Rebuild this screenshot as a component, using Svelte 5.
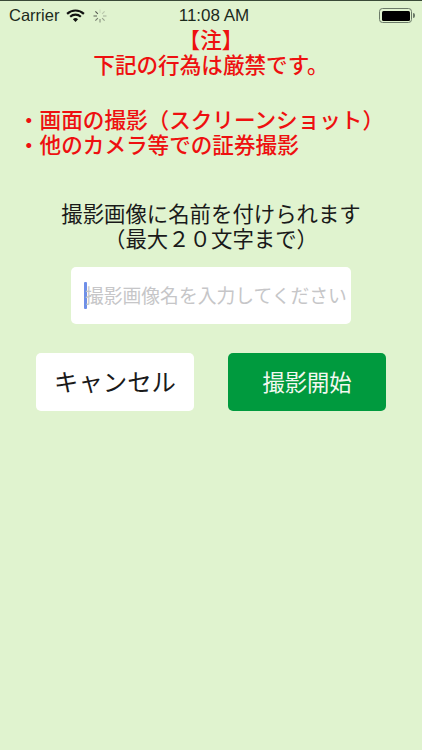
<script>
  const spokes = [0, 45, 90, 135, 180, 225, 270, 315];
</script>

<div class="screen">
  <div class="status">
    <div class="left">
      <span class="carrier">Carrier</span>
      <svg class="wifi" viewBox="0 0 20 15" width="19" height="14" aria-hidden="true">
        <path d="M1 5.2 A13 13 0 0 1 19 5.2" fill="none" stroke="#111" stroke-width="2.3"/>
        <path d="M4.3 8.3 A8.4 8.4 0 0 1 15.7 8.3" fill="none" stroke="#111" stroke-width="2.3"/>
        <path d="M7.2 11 A4.2 4.2 0 0 1 12.8 11 L10 14 Z" fill="#111"/>
      </svg>
      <svg class="spinner" viewBox="0 0 16 16" width="16" height="16" aria-hidden="true">
        {#each spokes as a, i}
          <line x1="8" y1="1.5" x2="8" y2="5" stroke="#333" stroke-width="1.1" opacity={0.12 + i * 0.1} transform="rotate({a} 8 8)"/>
        {/each}
      </svg>
    </div>
    <span class="time">11:08 AM</span>
    <div class="battery" aria-hidden="true">
      <div class="shell"><div class="level"></div></div>
      <div class="nub"></div>
    </div>
  </div>

  <p class="notice center">【注】<br />下記の行為は厳禁です。</p>
  <p class="notice rules">・画面の撮影&#xFF08;スクリーンショット&#xFF09;<br />・他のカメラ等での証券撮影</p>

  <p class="hint">撮影画像に名前を付けられます<br />&#xFF08;最大&#xFF12;&#xFF10;文字まで&#xFF09;</p>

  <div class="field">
    <span class="caret"></span>
    <span class="placeholder">撮影画像名を入力してください</span>
  </div>

  <div class="actions">
    <button class="cancel">キャンセル</button>
    <button class="start">撮影開始</button>
  </div>
</div>

<style>
  :global(body) {
    margin: 0;
    background: #e0f3cf;
  }
  .screen {
    width: 422px;
    height: 750px;
    box-sizing: border-box;
    overflow: hidden;
    background: #e0f3cf;
    border-top: 1px solid #3a4a38;
    font-family: "Noto Sans CJK JP", "Noto Sans", sans-serif;
    color: #1a1a1a;
  }
  p {
    margin: 0;
  }
  .status {
    height: 21px;
    padding: 4px 7px 0 9px;
    display: grid;
    grid-template-columns: 1fr auto 1fr;
    align-items: center;
    font-family: "Liberation Sans", Arial, sans-serif;
    color: #1c2a1c;
  }
  .left {
    display: flex;
    align-items: center;
    gap: 7px;
  }
  .carrier {
    font-size: 16.5px;
  }
  .time {
    padding-left: 4px;
    font-size: 17px;
  }
  .battery {
    justify-self: end;
    display: flex;
    align-items: center;
  }
  .shell {
    width: 28px;
    height: 10px;
    padding: 1.5px;
    border: 1px solid #6b7a68;
    border-radius: 3.5px;
  }
  .level {
    width: 100%;
    height: 100%;
    background: #000;
    border-radius: 1.5px;
  }
  .nub {
    width: 2px;
    height: 5px;
    margin-left: 1px;
    background: #6b7a68;
    border-radius: 0 2px 2px 0;
  }
  .notice {
    color: #ee1010;
    font-size: 21.6px;
    font-weight: 500;
    line-height: 25px;
  }
  .center {
    text-align: center;
  }
  .rules {
    margin-top: 30px;
    padding-left: 18px;
    white-space: nowrap;
  }
  .hint {
    margin-top: 44px;
    text-align: center;
    font-size: 21.4px;
    line-height: 25px;
  }
  .field {
    margin: 17px 0 0 71px;
    width: 280px;
    height: 57px;
    box-sizing: border-box;
    padding-left: 13px;
    background: #fff;
    border-radius: 5px;
    display: flex;
    align-items: center;
  }
  .caret {
    width: 3px;
    height: 27px;
    flex: none;
    background: #6f8fe8;
    border-radius: 1px;
  }
  .placeholder {
    margin: 0 0 2px -2px;
    font-size: 18.8px;
    white-space: nowrap;
    color: #c6c6c8;
  }
  .actions {
    margin: 29px 0 0 36px;
    display: flex;
    gap: 34px;
  }
  button {
    width: 158px;
    height: 58px;
    padding: 0 0 3px;
    border: 0;
    border-radius: 5px;
    font-family: inherit;
  }
  .cancel {
    background: #fff;
    color: #1a1a1a;
    font-size: 24.4px;
  }
  .start {
    background: #009a3e;
    color: #f2f8f0;
    font-size: 22.3px;
  }
</style>
